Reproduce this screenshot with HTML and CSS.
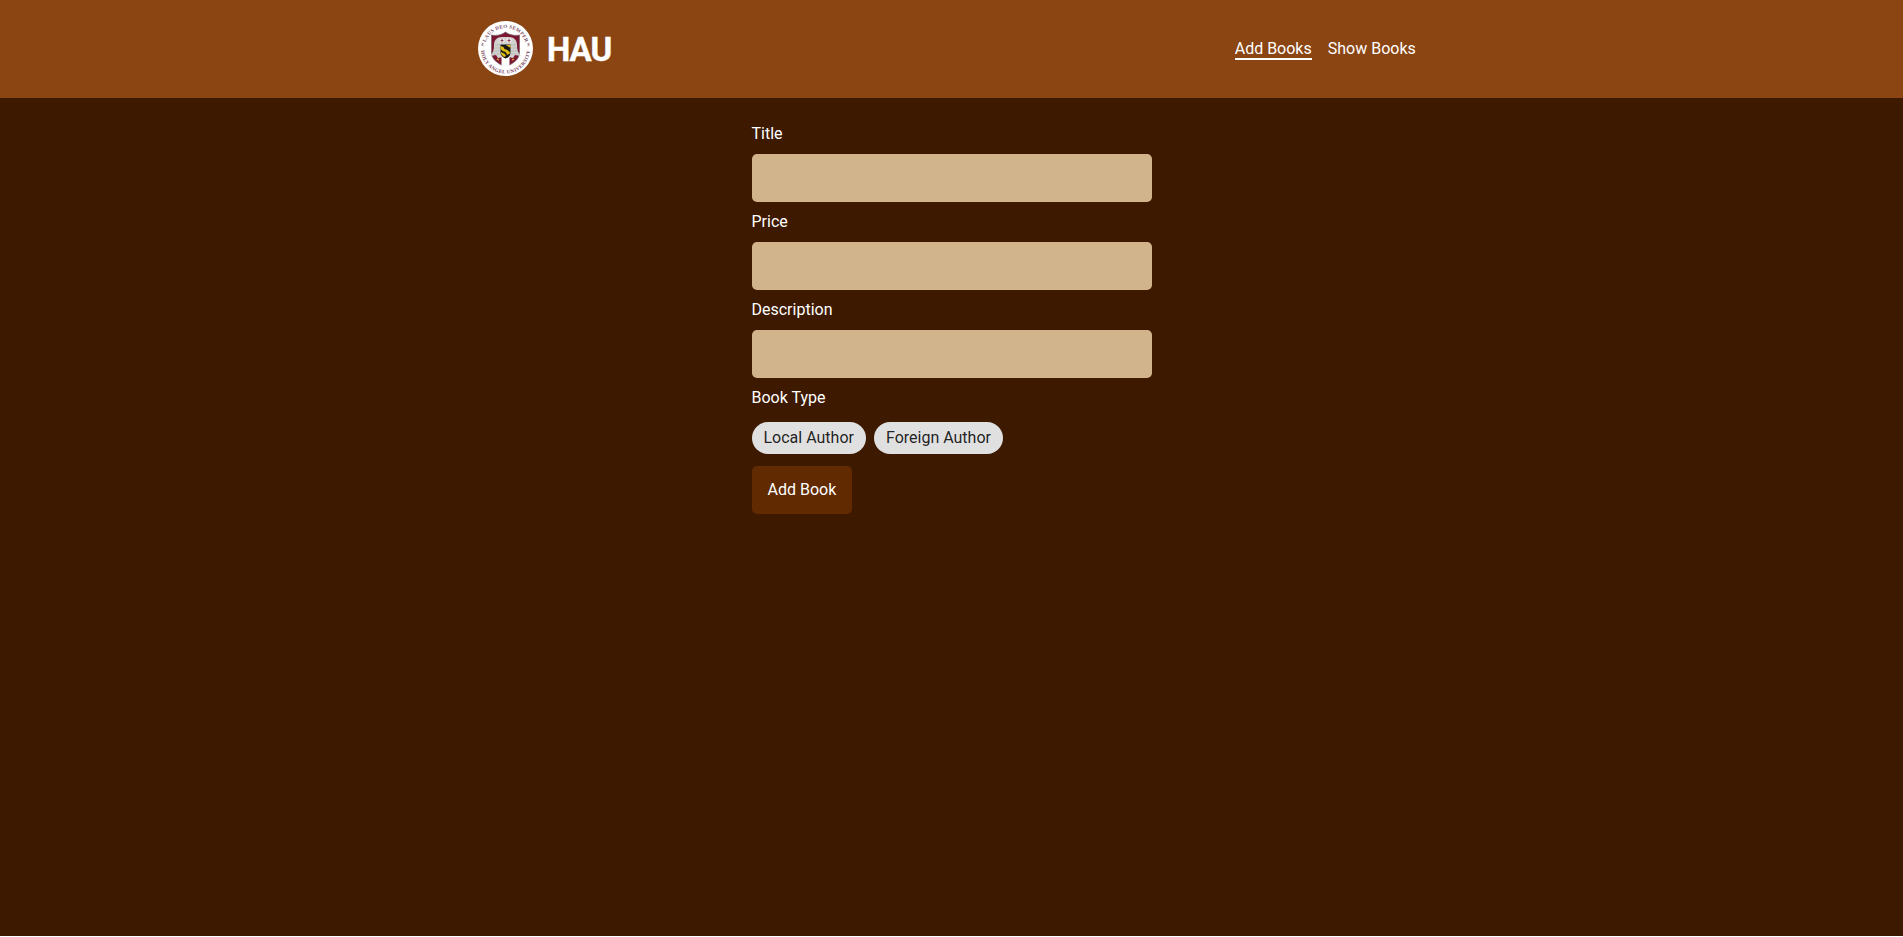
FILE: index.html
```
<!DOCTYPE html>
<html lang="en">
<head>
<meta charset="utf-8">
<title>HAU Books</title>
<link rel="stylesheet" href="styles.css">
</head>
<body>
<div class="app">
<header class="header">
  <div class="header-inner">
    <a class="brand">
      <svg class="logo" viewBox="0 0 55 55" aria-hidden="true">
        <defs>
          <path id="ring-top" d="M6.500 28a21 21 0 1 1 42 0"/>
          <path id="ring-bottom" d="M3 28a24.500 24.500 0 0 0 49 0"/>
        </defs>
        <circle cx="27.5" cy="27.5" r="27.5" fill="#fff"/>
        <g class="seal-text">
          <text><textPath href="#ring-top" startOffset="50%" text-anchor="middle" textLength="52">LAUS DEO SEMPER</textPath></text>
          <text><textPath href="#ring-bottom" startOffset="50%" text-anchor="middle" textLength="73">HOLY ANGEL UNIVERSITY</textPath></text>
        </g>
        <path d="M3.500 22l2 1-2 1 2 1M51.500 22l-2 1 2 1-2 1" fill="none" stroke="#8d6870" stroke-width=".7"/>
        <path d="M13.500 14c5 1 10 0 14-3 4 3 9 4 14 3v17c0 7-5 11-14 15-9-4-14-8-14-15z" fill="#7b1730" stroke="#74606a" stroke-width=".7"/>
        <path d="M16 24c0-5 3-8 8-8h7c5 0 8 3 8 8 0 5 1 8 4 11l-6-1-2 3-5-1h-5l-5 1-2-3-6 1c3-3 4-6 4-11z" fill="#d2d2d1"/>
        <path d="M17 24h5M16 27h6M15 30h7M14 33h8M33 24h5M33 27h6M33 30h7M33 33h8" stroke="#a9a9a9" stroke-width=".6"/>
        <circle cx="24" cy="19.500" r="2.500" fill="#eee"/><circle cx="31" cy="19.500" r="2.500" fill="#eee"/>
        <path d="M24 17.500v4M31 17.500v4M22.500 19.500h3M29.500 19.500h3" stroke="#832039" stroke-width=".8"/>
        <path d="M23.500 34h8v11l-4 2-4-2z" fill="#fff"/>
        <path d="M22.500 23.500h10v8c0 3-2 5-5 6-3-1-5-3-5-6z" fill="#191814"/>
        <path d="M22.500 25l3 1 1 2 3 1 3 3-3 2-2-3-3-1-2-2zM28 24l4.500 3v-3zM23 31l4 2 1 2-2 1-3-3z" fill="#dcb914"/>
        <path d="M19 38l2 1M34 39l2-1" stroke="#cf8b32" stroke-width="1.500"/>
      </svg>
      <span class="brand-name">HAU</span>
    </a>
    <nav class="nav">
      <a class="nav-link active">Add Books</a>
      <a class="nav-link">Show Books</a>
    </nav>
  </div>
</header>
<main>
  <form class="form">
    <label for="title">Title</label>
    <input id="title" class="field" type="text">
    <label for="price">Price</label>
    <input id="price" class="field" type="text">
    <label for="description">Description</label>
    <input id="description" class="field" type="text">
    <span class="type-label">Book Type</span>
    <div class="chips">
      <button class="chip" type="button">Local Author</button>
      <button class="chip" type="button">Foreign Author</button>
    </div>
    <button class="submit" type="button">Add Book</button>
  </form>
</main>
</div>
</body>
</html>
```
FILE: styles.css
```
* { box-sizing: border-box; }
body {
  margin: 0;
  background: #fff;
  color: #fff;
  font: 400 16px/24px Roboto, sans-serif;
}
.app { min-height: calc(100vh - 1px); background: #3d1900; }
.header { height: 98px; margin-bottom: 24px; background: #8b4513; }
.header-inner {
  width: 960px;
  height: 97px;
  margin: 0 auto;
  padding: 0 15.750px 0 6.500px;
  display: flex;
  align-items: center;
  justify-content: space-between;
}
.brand { display: flex; align-items: center; gap: 14px; }
.logo { width: 55px; height: 55px; display: block; }
.seal-text { fill: #78435a; font: 700 5px "Liberation Serif", serif; }
.brand-name {
  padding-top: 2px;
  font: 700 33px/38px Roboto, sans-serif;
  letter-spacing: -1px;
  -webkit-text-stroke: .4px #fff;
}
.nav { display: flex; gap: 16px; }
.nav-link { line-height: 22px; height: 22px; border-bottom: 2px solid transparent; }
.nav-link.active { border-color: #fff; }
.form {
  width: 400px;
  margin: 0 auto;
  display: flex;
  flex-direction: column;
  align-items: flex-start;
  gap: 8px;
}
.field {
  width: 100%;
  height: 48px;
  padding: 0 16px;
  border: 0;
  border-radius: 5px;
  background: #d2b48c;
  font: inherit;
}
.chips { display: flex; gap: 8px; padding: 4px 0; }
.chip {
  height: 32px;
  padding: 0 12px;
  border: 0;
  border-radius: 16px;
  background: #e0e0e0;
  color: rgba(0, 0, 0, .87);
  font: inherit;
}
.submit {
  height: 48px;
  padding: 0 16px;
  border: 0;
  border-radius: 5px;
  background: #622a00;
  color: #fff;
  font: inherit;
}
```
